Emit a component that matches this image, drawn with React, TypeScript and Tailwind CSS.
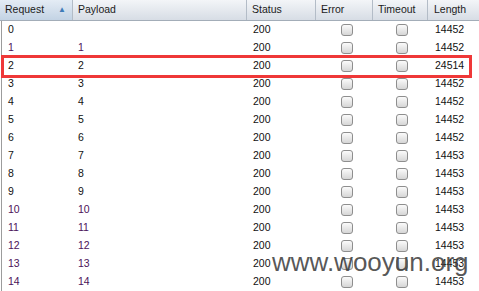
const rows = Array.from({ length: 15 }, (_, i) => ({
  request: i,
  payload: i === 0 ? "" : String(i),
  status: 200,
  length: i === 2 ? 24514 : i < 7 ? 14452 : 14453,
}));

const purple = [1, 10, 11, 12, 13, 14];

function Box() {
  return (
    <span className="block w-[12px] h-[12px] rounded-[3px] border border-[#8e8e8e] bg-gradient-to-b from-[#fbfbfb] to-[#d6d6d6]" />
  );
}

function Head({ label, sorted }: { label: string; sorted?: boolean }) {
  return (
    <div
      className={`flex items-center pl-[5px] border-r border-[#b3bcc7] ${
        sorted ? "bg-gradient-to-b from-[#e4ecf5] to-[#c3d3e4]" : ""
      }`}
    >
      <span>{label}</span>
      {sorted && <span className="ml-auto mr-[6px] text-[8px] text-[#3f7cb8]">▲</span>}
    </div>
  );
}

export default function App() {
  return (
    <div className="w-[479px] h-[291px] bg-white overflow-hidden relative font-['Liberation_Sans',Arial,sans-serif] text-[10.5px] text-[#111]">
      {/* header */}
      <div className="grid grid-cols-[73px_174px_69px_57px_55px_51px] h-[21px] border-b border-[#a3adb8] bg-gradient-to-b from-[#f3f5f8] to-[#d7dde5] text-[#1b1b1b]">
        <Head label="Request" sorted />
        <Head label="Payload" />
        <Head label="Status" />
        <Head label="Error" />
        <Head label="Timeout" />
        <div className="flex items-center pl-[6px]">Length</div>
      </div>

      {/* rows */}
      <div className="border-l border-[#9c9c9c] ml-px">
        {rows.map((r) => {
          const tone = purple.includes(r.request) ? "text-[#4b1258]" : "text-[#111]";
          return (
            <div
              key={r.request}
              className="grid grid-cols-[72px_174px_69px_57px_55px_51px] h-[18px] items-center"
            >
              <span className={`pl-[6px] ${tone}`}>{r.request}</span>
              <span className={`pl-[4px] ${tone}`}>{r.payload}</span>
              <span className="pl-[5px]">{r.status}</span>
              <span className="flex justify-center pl-[2px]">
                <Box />
              </span>
              <span className="flex justify-center">
                <Box />
              </span>
              <span className="pl-[6px]">{r.length}</span>
            </div>
          );
        })}
      </div>

      {/* highlight around row 2 */}
      <div className="absolute left-[1px] top-[55px] w-[471px] h-[23px] border-[3px] border-[#ef3838]" />

      {/* watermark */}
      <div className="absolute left-[272px] top-[249px] text-[26px] leading-none text-[#3a3a3a]/85 font-['Liberation_Sans',Arial,sans-serif]">
        www.wooyun.org
      </div>
    </div>
  );
}
